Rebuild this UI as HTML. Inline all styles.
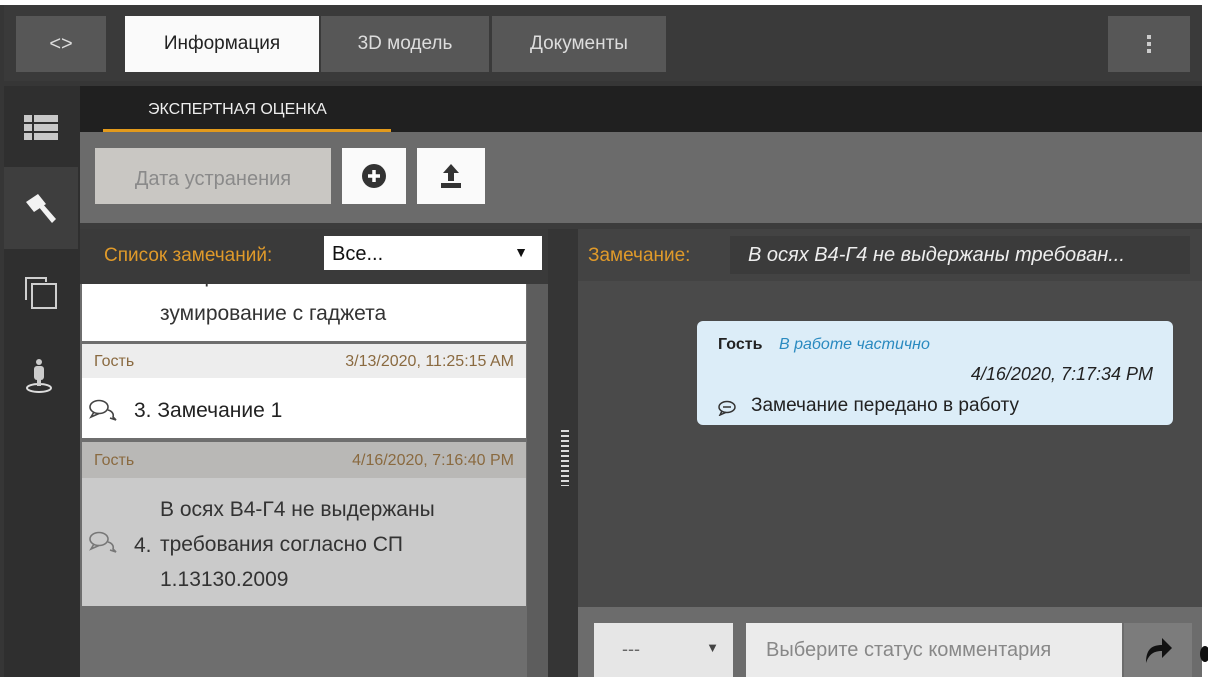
<!DOCTYPE html>
<html><head><meta charset="utf-8"><style>
*{margin:0;padding:0;box-sizing:border-box}
body{width:1208px;height:684px;background:#fff;position:relative;overflow:hidden;font-family:"Liberation Sans","DejaVu Sans",sans-serif}
.a{position:absolute}
.btn{position:absolute;background:#575757;color:#ddd;font-size:19px;display:flex;align-items:center;justify-content:center}
</style></head><body>
<div class="a" style="left:0;top:5px;width:1202px;height:672px;background:#363636"></div>
<div class="a" style="left:4px;top:5px;width:1198px;height:76px;background:#3a3a3a"></div>
<div class="btn" style="left:16px;top:16px;width:90px;height:56px;font-size:20px">&lt;&gt;</div>
<div class="btn" style="left:125px;top:16px;width:194px;height:56px;background:#fafafa;color:#222">Информация</div>
<div class="btn" style="left:321px;top:16px;width:168px;height:56px">3D модель</div>
<div class="btn" style="left:492px;top:16px;width:174px;height:56px">Документы</div>
<div class="btn" style="left:1108px;top:16px;width:82px;height:56px;flex-direction:column;gap:3px"><i style="width:4px;height:4px;background:#ccc"></i><i style="width:4px;height:4px;background:#ccc"></i><i style="width:4px;height:4px;background:#ccc"></i></div>
<div class="a" style="left:4px;top:86px;width:76px;height:591px;background:#2f2f2f"></div>
<div class="a" style="left:4px;top:167px;width:74px;height:82px;background:#3e3e3e"></div>
<svg class="a" style="left:22px;top:113px" width="38" height="30" viewBox="0 0 38 30"><g fill="#c8c8c8"><rect x="2" y="2" width="8" height="7"/><rect x="12" y="2" width="24" height="7"/><rect x="2" y="11" width="8" height="7"/><rect x="12" y="11" width="24" height="7"/><rect x="2" y="20" width="8" height="7"/><rect x="12" y="20" width="24" height="7"/></g></svg>
<svg class="a" style="left:22px;top:190px" width="40" height="40" viewBox="0 0 40 40"><g fill="#f2f2f2"><path d="M4 12 L16 4 L24 14 L12 22Z"/><path d="M16 16 L20 13 L34 29 L30 33Z"/></g></svg>
<svg class="a" style="left:22px;top:274px" width="38" height="38" viewBox="0 0 38 38"><g fill="none" stroke="#cfcfcf" stroke-width="2"><path d="M4 26 V4 H24 V8"/><rect x="10" y="10" width="24" height="24"/></g></svg>
<svg class="a" style="left:24px;top:356px" width="32" height="38" viewBox="0 0 32 38"><ellipse cx="15" cy="32" rx="12" ry="4" fill="none" stroke="#ddd" stroke-width="2"/><rect x="10" y="10" width="10" height="14" rx="3" fill="#ccc"/><circle cx="15" cy="6" r="3" fill="#ccc"/><rect x="13" y="22" width="4" height="8" fill="#ccc"/></svg>
<div class="a" style="left:80px;top:86px;width:1122px;height:46px;background:#202020"></div>
<div class="a" style="left:148px;top:101px;color:#eee;font-size:16px">ЭКСПЕРТНАЯ ОЦЕНКА</div>
<div class="a" style="left:103px;top:129px;width:288px;height:3px;background:#e39a1c"></div>
<div class="a" style="left:80px;top:132px;width:1122px;height:91px;background:#6b6b6b"></div>
<div class="btn" style="left:95px;top:148px;width:236px;height:56px;background:#c9c7c3;color:#8a8a8a;font-size:20px;padding-top:6px">Дата устранения</div>
<div class="btn" style="left:342px;top:148px;width:64px;height:56px;background:#fafafa"><svg width="26" height="26" viewBox="0 0 26 26"><circle cx="13" cy="13" r="12" fill="#333"/><path d="M13 7v12M7 13h12" stroke="#fff" stroke-width="3.5"/></svg></div>
<div class="btn" style="left:417px;top:148px;width:68px;height:56px;background:#fafafa"><svg width="30" height="30" viewBox="0 0 30 30"><path d="M15 3 L23 12 H18 V20 H12 V12 H7Z" fill="#333"/><rect x="5" y="22" width="20" height="5" fill="#333"/></svg></div>
<div class="a" style="left:80px;top:223px;width:1122px;height:6px;background:#3c3c3c"></div>
<div class="a" style="left:80px;top:229px;width:468px;height:448px;background:#3a3a3a"></div>
<div class="a" style="left:80px;top:284px;width:468px;height:393px;background:#6e6e6e"></div>
<div class="a" style="left:527px;top:284px;width:21px;height:393px;background:#5d5d5d"></div>
<div class="a" style="left:82px;top:284px;width:444px;height:57px;background:#fff;overflow:hidden">
<div style="position:absolute;left:78px;top:-20px;font-size:21px;color:#333">интерактивности</div>
<div style="position:absolute;left:78px;top:18px;font-size:21px;color:#333">зумирование с гаджета</div></div>
<div class="a" style="left:80px;top:229px;width:468px;height:55px;background:#3a3a3a"></div>
<div class="a" style="left:104px;top:245px;color:#e09a2a;font-size:19px">Список замечаний:</div>
<div class="a" style="left:324px;top:236px;width:218px;height:34px;background:#fff;color:#111;font-size:20px;padding:7px 8px">Все...<span style="position:absolute;right:14px;top:8px;font-size:14px">▼</span></div>
<div class="a" style="left:82px;top:344px;width:444px;height:34px;background:#ededed;font-size:16px;color:#8a6a40"><span style="position:absolute;left:12px;top:9px">Гость</span><span style="position:absolute;right:12px;top:9px">3/13/2020, 11:25:15 AM</span></div>
<div class="a" style="left:82px;top:378px;width:444px;height:60px;background:#fff;font-size:21px;color:#222"><svg style="position:absolute;left:6px;top:20px" width="30" height="24" viewBox="0 0 30 24"><g fill="none" stroke="#444" stroke-width="1.6"><ellipse cx="11" cy="9" rx="9" ry="6.5"/><path d="M6 14 L3 19 L11 15.5"/><path d="M20 12 C24 13 26 16 25 19 L28 22 L22 20"/></g></svg><span style="position:absolute;left:52px;top:21px">3. Замечание 1</span></div>
<div class="a" style="left:82px;top:442px;width:444px;height:36px;background:#b9b8b6;font-size:16px;color:#8a6a40"><span style="position:absolute;left:12px;top:10px">Гость</span><span style="position:absolute;right:12px;top:10px">4/16/2020, 7:16:40 PM</span></div>
<div class="a" style="left:82px;top:478px;width:444px;height:128px;background:#cacaca;font-size:21px;color:#333;line-height:35px"><svg style="position:absolute;left:6px;top:52px" width="30" height="24" viewBox="0 0 30 24"><g fill="none" stroke="#777" stroke-width="1.6"><ellipse cx="11" cy="9" rx="9" ry="6.5"/><path d="M6 14 L3 19 L11 15.5"/><path d="M20 12 C24 13 26 16 25 19 L28 22 L22 20"/></g></svg><span style="position:absolute;left:52px;top:50px">4.</span><div style="position:absolute;left:78px;top:14px">В осях В4-Г4 не выдержаны<br>требования согласно СП<br>1.13130.2009</div></div>
<div class="a" style="left:548px;top:229px;width:30px;height:448px;background:#353535"></div>
<div class="a" style="left:561px;top:430px;width:8px;height:56px;background:repeating-linear-gradient(#ddd 0 2px,transparent 2px 5px)"></div>
<div class="a" style="left:578px;top:229px;width:624px;height:52px;background:#434343"></div>
<div class="a" style="left:588px;top:245px;color:#e09a2a;font-size:19px">Замечание:</div>
<div class="a" style="left:730px;top:236px;width:460px;height:38px;background:#3b3b3b;color:#eee;font-size:20px;font-style:italic;padding:8px 18px;white-space:nowrap">В осях В4-Г4 не выдержаны требован...</div>
<div class="a" style="left:578px;top:281px;width:624px;height:326px;background:#4a4a4a"></div>
<div class="a" style="left:697px;top:321px;width:476px;height:104px;background:#dcedf8;border-radius:6px">
<span style="position:absolute;left:21px;top:15px;font-size:16px;font-weight:bold;color:#222">Гость</span>
<span style="position:absolute;left:82px;top:15px;font-size:16px;font-style:italic;color:#2a8ac0">В работе частично</span>
<span style="position:absolute;right:20px;top:43px;font-size:18px;font-style:italic;color:#222">4/16/2020, 7:17:34 PM</span>
<svg style="position:absolute;left:20px;top:79px" width="20" height="16" viewBox="0 0 20 16"><g fill="none" stroke="#333" stroke-width="1.5"><ellipse cx="10" cy="7" rx="8" ry="5.5"/><path d="M6 7h8"/><path d="M5 11 L3 15 L9 12.3"/></g></svg>
<span style="position:absolute;left:54px;top:74px;font-size:19px;color:#222">Замечание передано в работу</span></div>
<div class="a" style="left:578px;top:607px;width:624px;height:70px;background:#6c6c6c"></div>
<div class="a" style="left:594px;top:623px;width:139px;height:54px;background:#e6e6e6;color:#666;font-size:18px;padding:16px 28px">---<span style="position:absolute;right:14px;top:17px;font-size:13px;color:#444">▼</span></div>
<div class="a" style="left:746px;top:623px;width:376px;height:54px;background:#ebebeb;color:#888;font-size:20px;padding:16px 20px;white-space:nowrap">Выберите статус комментария</div>
<div class="a" style="left:1124px;top:623px;width:68px;height:54px;background:#7c7c7c"><svg style="position:absolute;left:18px;top:12px" width="32" height="30" viewBox="0 0 32 30"><path d="M4 28 C4 14 10 10 20 10 V3 L30 13 L20 23 V16 C12 16 7 19 4 28Z" fill="#111"/></svg></div>
<div class="a" style="left:1200px;top:646px;width:10px;height:16px;border-radius:50%;background:#111"></div>
</body></html>
